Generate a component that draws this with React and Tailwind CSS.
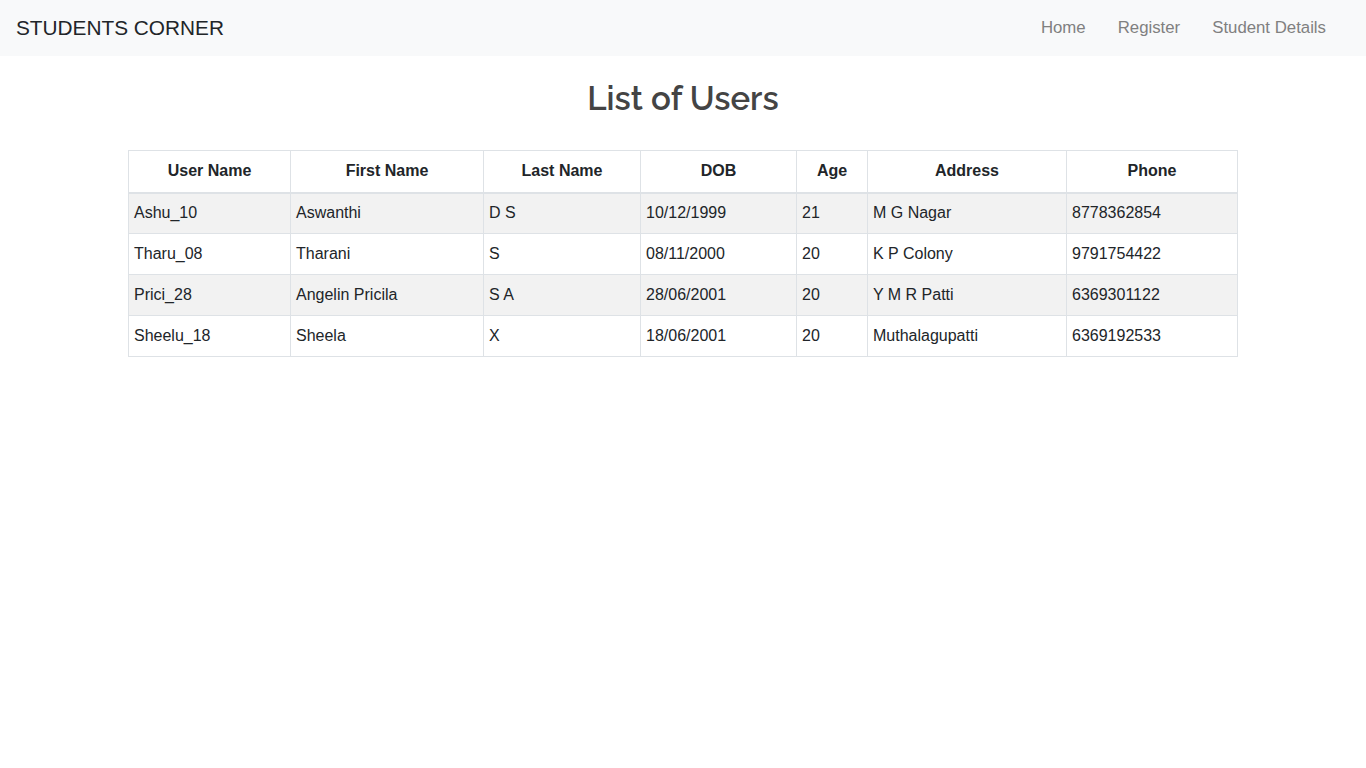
import React from "react";

const rows = [
  ["Ashu_10", "Aswanthi", "D S", "10/12/1999", "21", "M G Nagar", "8778362854"],
  ["Tharu_08", "Tharani", "S", "08/11/2000", "20", "K P Colony", "9791754422"],
  ["Prici_28", "Angelin Pricila", "S A", "28/06/2001", "20", "Y M R Patti", "6369301122"],
  ["Sheelu_18", "Sheela", "X", "18/06/2001", "20", "Muthalagupatti", "6369192533"],
];

const headers = ["User Name", "First Name", "Last Name", "DOB", "Age", "Address", "Phone"];
const widths = ["w-[162px]", "w-[193px]", "w-[157px]", "w-[156px]", "w-[71px]", "w-[199px]", "w-[171px]"];

export default function App() {
  return (
    <div className="min-h-screen bg-white text-[#212529]" style={{ fontFamily: '"Liberation Sans", Arial, sans-serif' }}>
      <nav className="h-14 bg-[#f8f9fa] flex items-center justify-between pl-4 pr-[24px]">
        <span className="text-[20.8px] text-[#212529] leading-[30px]">STUDENTS CORNER</span>
        <ul className="flex items-center text-[16.8px] text-[#808080]">
          <li className="px-4">Home</li>
          <li className="px-4">Register</li>
          <li className="px-4">Student Details</li>
        </ul>
      </nav>
      <h1
        className="text-center text-[33px] font-semibold text-[#444] leading-[40px] mt-[23px] mb-[31px]"
        style={{ fontFamily: 'Raleway, Lato, "Open Sans", sans-serif' }}
      >
        List of Users
      </h1>
      <div className="flex justify-center">
        <table className="w-[1110px] border-collapse text-[16px] table-fixed">
          <thead>
            <tr>
              {headers.map((h, i) => (
                <th key={h} className={`${widths[i]} border border-[#dee2e6] border-b-2 font-bold text-center h-[42px] px-[5px] py-0`}>
                  {h}
                </th>
              ))}
            </tr>
          </thead>
          <tbody>
            {rows.map((r, ri) => (
              <tr key={ri} className={ri % 2 === 0 ? "bg-[#f2f2f2]" : "bg-white"}>
                {r.map((c, ci) => (
                  <td key={ci} className="border border-[#dee2e6] h-[41px] px-[5px] py-0 text-left">
                    {c}
                  </td>
                ))}
              </tr>
            ))}
          </tbody>
        </table>
      </div>
    </div>
  );
}
